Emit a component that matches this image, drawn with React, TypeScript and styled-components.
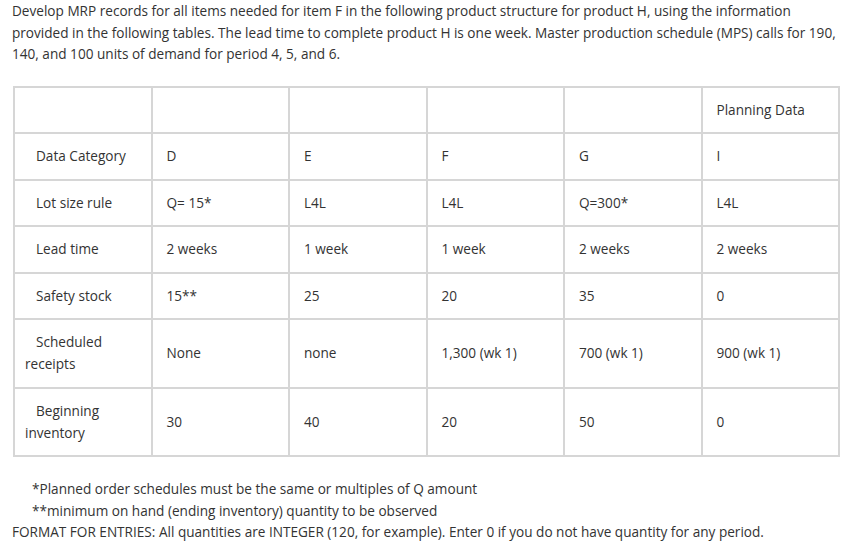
import React from "react";
import styled, { createGlobalStyle } from "styled-components";

const Global = createGlobalStyle`
  html, body { margin: 0; padding: 0; background: #fff; }
  body { font-family: "Open Sans", "Liberation Sans", sans-serif; color: #333; font-size: 13.6px; }
`;

const Page = styled.div`
  padding: 0 6px 0 12px;
  width: 846px;
  box-sizing: border-box;
`;

const Intro = styled.p`
  margin: 0;
  font-size: 13.6px;
  line-height: 21.5px;
  white-space: nowrap;
`;

const Table = styled.table`
  margin: 21px 0 0 1px;
  width: 827px;
  table-layout: fixed;
  border-collapse: collapse;
  border: 2px solid #d6d6d6;
  font-size: 13.6px;
  line-height: 22px;
`;

const Cell = styled.td<{ $first?: boolean }>`
  border: 2px solid #d6d6d6;
  padding: ${(p) => (p.$first ? "11px 10px 11.5px" : "11px 14px 11.5px")};
  vertical-align: middle;
  text-indent: ${(p) => (p.$first ? "11px" : "0")};
`;

const Notes = styled.div`
  margin-top: 21px;
  font-size: 13.6px;
  line-height: 21.6px;
`;

const Note = styled.div<{ $indent?: boolean }>`
  padding-left: ${(p) => (p.$indent ? "20px" : "0")};
`;

const rows: string[][] = [
  ["", "", "", "", "", "Planning Data"],
  ["Data Category", "D", "E", "F", "G", "I"],
  ["Lot size rule", "Q= 15*", "L4L", "L4L", "Q=300*", "L4L"],
  ["Lead time", "2 weeks", "1 week", "1 week", "2 weeks", "2 weeks"],
  ["Safety stock", "15**", "25", "20", "35", "0"],
  ["Scheduled receipts", "None", "none", "1,300 (wk 1)", "700 (wk 1)", "900 (wk 1)"],
  ["Beginning inventory", "30", "40", "20", "50", "0"],
];

export default function App() {
  return (
    <Page>
      <Global />
      <Intro>
        Develop MRP records for all items needed for item F in the following product structure for product H, using the information
        <br />
        provided in the following tables. The lead time to complete product H is one week. Master production schedule (MPS) calls for 190,
        <br />
        140, and 100 units of demand for period 4, 5, and 6.
      </Intro>
      <Table>
        <tbody>
          {rows.map((r, i) => (
            <tr key={i}>
              {r.map((c, j) => (
                <Cell key={j} $first={j === 0}>
                  {c}
                </Cell>
              ))}
            </tr>
          ))}
        </tbody>
      </Table>
      <Notes>
        <Note $indent>*Planned order schedules must be the same or multiples of Q amount</Note>
        <Note $indent>**minimum on hand (ending inventory) quantity to be observed</Note>
        <Note>FORMAT FOR ENTRIES: All quantities are INTEGER (120, for example). Enter 0 if you do not have quantity for any period.</Note>
      </Notes>
    </Page>
  );
}
